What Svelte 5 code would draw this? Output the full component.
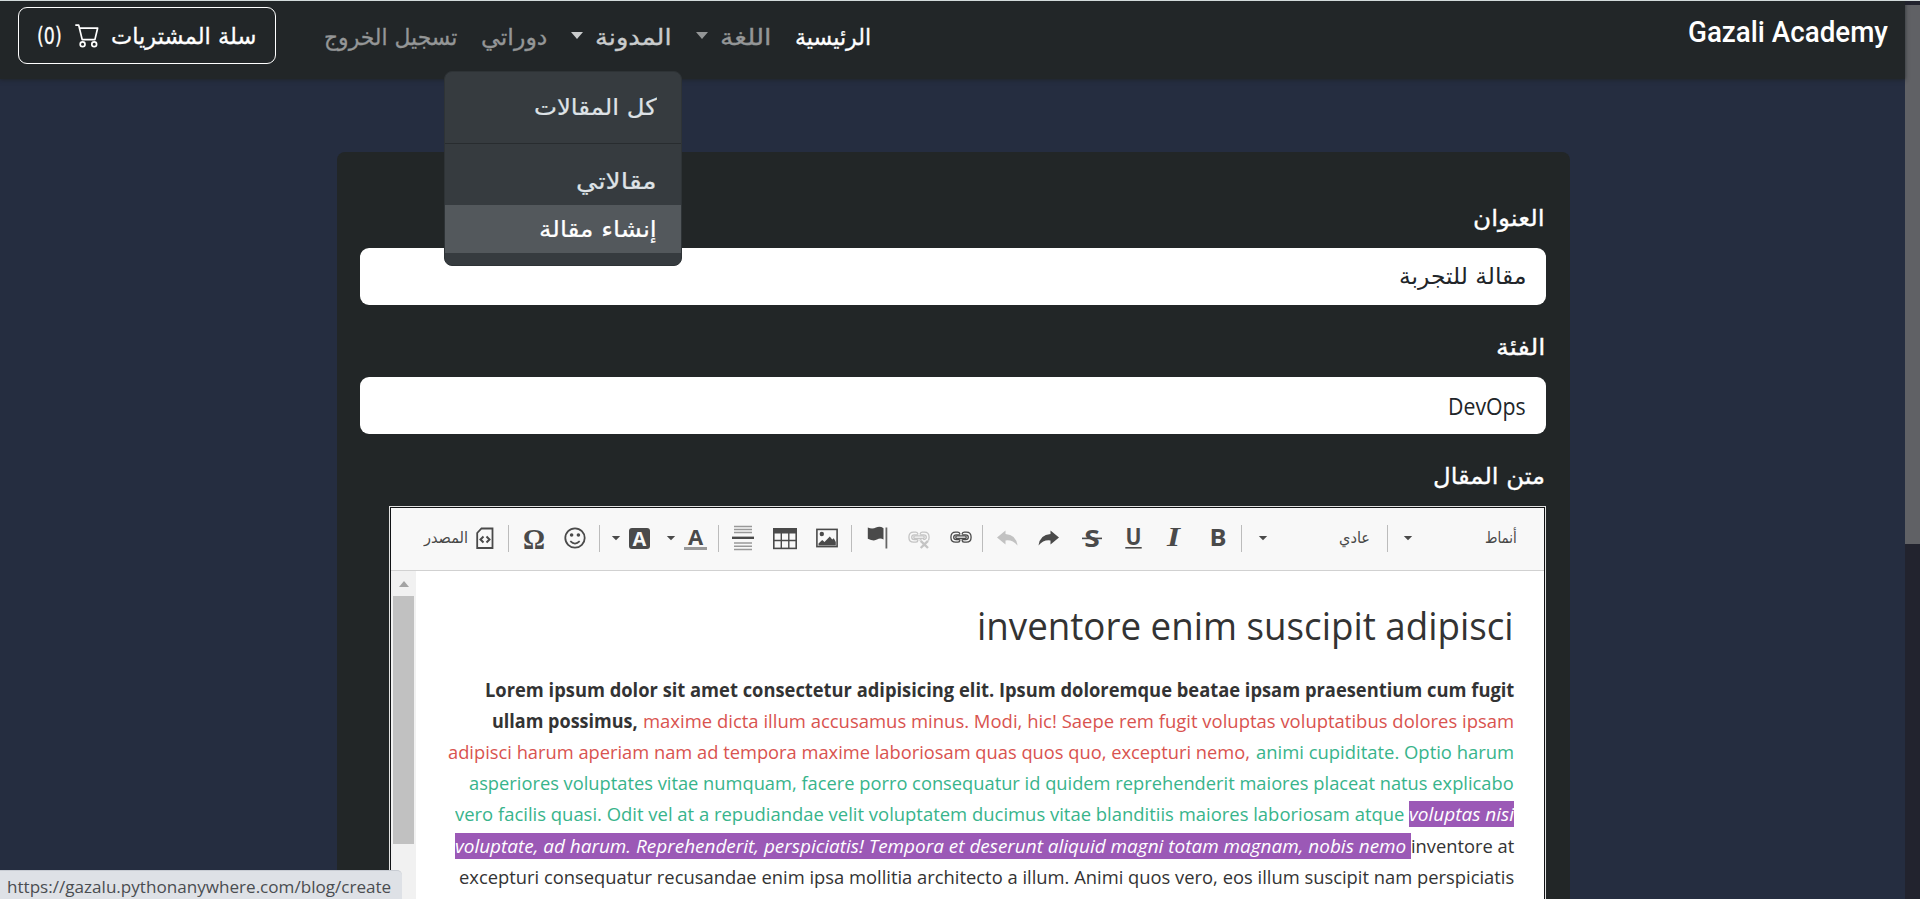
<script>
  // Squeezes or stretches a single line of text to the width of its slot.
  function fit(node) {
    const want = node.parentElement.clientWidth;
    const have = node.offsetWidth;
    if (have > 0) node.style.transform = `scaleX(${want / have})`;
  }

  const links = [
    { text: 'تسجيل الخروج', w: 133, gap: 48, tone: 'dim' },
    { text: 'دوراتي', w: 66, gap: 24, tone: 'dim' },
    { text: 'المدونة', w: 77, gap: 24, tone: 'open', caret: true },
    { text: 'اللغة', w: 51, gap: 24, tone: 'dim', caret: true },
    { text: 'الرئيسية', w: 76, gap: 24, tone: 'active' }
  ];

  const tools = [
    { k: 'label', text: 'المصدر', gap: 33, w: 44 },
    { k: 'source', gap: 8, w: 18 },
    { k: 'sep', gap: 14, w: 1 },
    { k: 'omega', gap: 14, w: 22 },
    { k: 'smile', gap: 19, w: 22 },
    { k: 'sep', gap: 13, w: 1 },
    { k: 'caret', gap: 11, w: 10 },
    { k: 'bg', gap: 8, w: 21 },
    { k: 'caret', gap: 16, w: 10 },
    { k: 'color', gap: 8, w: 23 },
    { k: 'sep', gap: 11, w: 1 },
    { k: 'rule', gap: 13, w: 22 },
    { k: 'table', gap: 19, w: 24 },
    { k: 'image', gap: 19, w: 22 },
    { k: 'sep', gap: 13, w: 1 },
    { k: 'flag', gap: 15, w: 21 },
    { k: 'unlink', gap: 20, w: 22 },
    { k: 'link', gap: 20, w: 22 },
    { k: 'sep', gap: 10, w: 1 },
    { k: 'undo', gap: 14, w: 21 },
    { k: 'redo', gap: 20, w: 21 },
    { k: 'strike', gap: 23, w: 20 },
    { k: 'underline', gap: 23, w: 17 },
    { k: 'italic', gap: 25, w: 13 },
    { k: 'bold', gap: 31, w: 14 },
    { k: 'sep', gap: 16, w: 1 },
    { k: 'caret', gap: 16, w: 10 },
    { k: 'label', text: 'عادي', gap: 71, w: 31 },
    { k: 'sep', gap: 17, w: 1 },
    { k: 'caret', gap: 15, w: 10 },
    { k: 'label', text: 'أنماط', gap: 72, w: 32 }
  ];

  const lines = [
    [{ c: 'strong', w: 1029, t: 'Lorem ipsum dolor sit amet consectetur adipisicing elit. Ipsum doloremque beatae ipsam praesentium cum fugit' }],
    [
      { c: 'strong', w: 146, t: 'ullam possimus,' },
      { c: 'red', w: 871, pad: 5, t: 'maxime dicta illum accusamus minus. Modi, hic! Saepe rem fugit voluptas voluptatibus dolores ipsam' }
    ],
    [
      { c: 'red', w: 802, t: 'adipisci harum aperiam nam ad tempora maxime laboriosam quas quos quo, excepturi nemo,' },
      { c: 'green', w: 258, pad: 6, t: 'animi cupiditate. Optio harum' }
    ],
    [{ c: 'green', w: 1045, t: 'asperiores voluptates vitae numquam, facere porro consequatur id quidem reprehenderit maiores placeat natus explicabo' }],
    [
      { c: 'green', w: 949, t: 'vero facilis quasi. Odit vel at a repudiandae velit voluptatem ducimus vitae blanditiis maiores laboriosam atque' },
      { c: 'mark', w: 105, pad: 5, t: 'voluptas nisi' }
    ],
    [
      { c: 'mark', w: 956, t: 'voluptate, ad harum. Reprehenderit, perspiciatis! Tempora et deserunt aliquid magni totam magnam, nobis nemo\u00a0' },
      { c: 'plain', w: 103, t: 'inventore at' }
    ],
    [{ c: 'plain', w: 1055, t: 'excepturi consequatur recusandae enim ipsa mollitia architecto a illum. Animi quos vero, eos illum suscipit nam perspiciatis' }]
  ];
</script>

{#snippet slot(text, w)}
  <span class="slot" style="width:{w}px"><bdi use:fit>{text}</bdi></span>
{/snippet}

{#snippet icon(k, w)}
  <svg class="icon" width={w} height="26" viewBox="0 0 {w} 26" fill="none" stroke="#4a4a4a">
    {#if k === 'source'}
      <path d="M5.5 3.5H16.5V23H1.2V8Z" stroke-width="1.8" />
      <path d="M7.5 11.5 4.5 14.5 7.5 17.5M10.5 11.5 13.5 14.5 10.5 17.5" stroke-width="2" />
    {:else if k === 'omega'}
      <text x="11" y="23.8" class="glyph omega" font-size="29" textLength="22" lengthAdjust="spacingAndGlyphs">Ω</text>
    {:else if k === 'smile'}
      <circle cx="11" cy="13" r="9.7" stroke-width="1.8" />
      <path d="M6.3 16.2Q11 21 15.7 16.2" stroke-width="1.7" />
      <circle cx="7.6" cy="10" r="1.8" fill="#4a4a4a" stroke="none" />
      <circle cx="14.4" cy="10" r="1.8" fill="#4a4a4a" stroke="none" />
    {:else if k === 'caret'}
      <path d="M.8 11H9.2L5 15.2Z" fill="#4a4a4a" stroke="none" />
    {:else if k === 'bg'}
      <rect x="0" y="3" width="21" height="21" rx="3" fill="#4a4a4a" stroke="none" />
      <text x="10.5" y="20.5" class="glyph light" font-size="20">A</text>
    {:else if k === 'color'}
      <text x="11.5" y="19.5" class="glyph" font-size="22">A</text>
      <rect x="0" y="22" width="23" height="3" fill="#999" stroke="none" />
    {:else if k === 'rule'}
      <path d="M2 1.5H20M2 4.5H20M2 7.5H20M2 18H20M2 21.3H20M2 24.5H20" stroke="#999" stroke-width="1.4" />
      <path d="M0 12.8H22" stroke-width="2.4" />
    {:else if k === 'table'}
      <rect x=".8" y="3.8" width="22.4" height="19.6" stroke-width="1.6" />
      <rect x="0" y="3" width="24" height="5.5" fill="#4a4a4a" stroke="none" />
      <path d="M8.3 8V23M15.8 8V23M1 15.5H23" stroke-width="1.4" />
    {:else if k === 'image'}
      <rect x=".9" y="4.4" width="20.2" height="17.2" stroke-width="1.6" />
      <circle cx="5.8" cy="9" r="2.2" fill="#4a4a4a" stroke="none" />
      <path d="M2.5 20.5V18.5L6.2 15 8.5 17 13.8 11.5 16.2 14.6 17.8 13.3 19.8 17V20.5Z" fill="#4a4a4a" stroke="none" />
    {:else if k === 'flag'}
      <path d="M.8 2.5Q5.2 4.4 9 2.6T16.5 3.2V14.5Q13.2 12.6 10 14.6T.8 13.8Z" fill="#4a4a4a" stroke="none" />
      <path d="M19.4 2.5V23.5" stroke="#666" stroke-width="1.8" />
    {:else if k === 'link' || k === 'unlink'}
      <g stroke={k === 'unlink' ? '#c4c4c4' : '#4a4a4a'} stroke-width="1.3">
        <path d="M9.8 9.6V8.6Q9.4 7.2 7.6 7.2H5.6Q.9 7.2 .9 12.2T5.6 17.2H7.6Q9.4 17.2 9.8 15.8V14.8M12.2 9.6V8.6Q12.6 7.2 14.4 7.2H16.4Q21.1 7.2 21.1 12.2T16.4 17.2H14.4Q12.6 17.2 12.2 15.8V14.8" />
        <path d="M9.8 9.8H6.2Q3.7 9.8 3.7 12.2T6.2 14.6H9.8M12.2 9.8H15.8Q18.3 9.8 18.3 12.2T15.8 14.6H12.2" />
        <rect x="5.8" y="10.9" width="10.4" height="2.6" rx="1.2" fill="#f8f8f8" />
        {#if k === 'unlink'}
          <path d="M12.5 15.5 20.3 23M20.3 15.5 12.5 23" stroke="#f8f8f8" stroke-width="5" />
          <path d="M12.7 15.8 20 23M20 15.8 12.7 23" stroke-width="2.4" />
        {/if}
      </g>
    {:else if k === 'redo'}
      <path d="M12.5 5.5 21 12.5 12.5 19.5V15.5Q5.5 14.5 .5 20.5 2 9.5 12.5 9Z" fill="#4a4a4a" stroke="none" />
    {:else if k === 'undo'}
      <path d="M8.5 5.5 0 12.5 8.5 19.5V15.5Q15.5 14.5 20.5 20.5 19 9.5 8.5 9Z" fill="#c2c2c2" stroke="none" />
    {:else if k === 'strike'}
      <text x="10" y="21.6" class="glyph" font-size="24" textLength="15.5" lengthAdjust="spacingAndGlyphs">S</text>
      <path d="M0 13.4H20" stroke-width="1.6" />
    {:else if k === 'underline'}
      <text x="8.5" y="19.6" class="glyph" font-size="22.5" textLength="16" lengthAdjust="spacingAndGlyphs">U</text>
      <path d="M.3 22.8H16.7" stroke-width="1.6" />
    {:else if k === 'italic'}
      <text x="6.5" y="21.3" class="glyph serif" font-size="27" textLength="13" lengthAdjust="spacingAndGlyphs">I</text>
    {:else if k === 'bold'}
      <text x="7" y="21.3" class="glyph" font-size="24" textLength="17" lengthAdjust="spacingAndGlyphs">B</text>
    {/if}
  </svg>
{/snippet}

<div class="screen">
  <div class="page">
    <header class="navbar">
      <button class="cart">
        {@render slot('(0)', 25)}
        <svg width="24" height="24" viewBox="0 0 24 24" fill="none" stroke="#fff" stroke-width="1.7" stroke-linejoin="round">
          <path d="M.3 1.1H3.7L7.2 15.6H19.9L22.6 4.2H4.6" />
          <circle cx="7.6" cy="20.3" r="2.4" />
          <circle cx="19.2" cy="20.3" r="2.4" />
        </svg>
        {@render slot('سلة المشتريات', 145)}
      </button>
      <nav class="links">
        {#each links as link}
          <span class="link {link.tone}" style="margin-left:{link.gap}px">
            {#if link.caret}<i class="arrow"></i>{/if}
            {@render slot(link.text, link.w)}
          </span>
        {/each}
      </nav>
      <div class="brand">{@render slot('Gazali Academy', 200)}</div>

      <div class="menu">
        <div class="item">{@render slot('كل المقالات', 123)}</div>
        <hr />
        <div class="item">{@render slot('مقالاتي', 81)}</div>
        <div class="item hover">{@render slot('إنشاء مقالة', 118)}</div>
      </div>
    </header>

    <main class="card">
      <div class="label">{@render slot('العنوان', 72)}</div>
      <div class="input">{@render slot('مقالة للتجربة', 127)}</div>
      <div class="label">{@render slot('الفئة', 49)}</div>
      <div class="input latin">{@render slot('DevOps', 78)}</div>
      <div class="label">{@render slot('متن المقال', 112)}</div>

      <section class="editor">
        <div class="toolbar">
          {#each tools as tool}
            <span class="tool" style="margin-left:{tool.gap}px">
              {#if tool.k === 'label'}
                {@render slot(tool.text, tool.w)}
              {:else if tool.k === 'sep'}
                <i class="sep"></i>
              {:else}
                {@render icon(tool.k, tool.w)}
              {/if}
            </span>
          {/each}
        </div>
        <div class="body">
          <div class="track">
            <i class="up"></i>
            <i class="thumb"></i>
          </div>
          <article>
            <h1>{@render slot('inventore enim suscipit adipisci', 537)}</h1>
            {#each lines as line}
              <div class="line">
                {#each line as run}
                  <span class="run {run.c}" style="margin-left:{run.pad ?? 0}px">{@render slot(run.t, run.w)}</span>
                {/each}
              </div>
            {/each}
          </article>
        </div>
      </section>
    </main>
  </div>
  <aside class="scroll"><i></i></aside>
  <div class="status">{@render slot('https://gazalu.pythonanywhere.com/blog/create', 384)}</div>
</div>

<style>
  :global(body) {
    margin: 0;
    overflow: hidden;
  }
  .screen {
    position: relative;
    box-sizing: border-box;
    display: flex;
    width: 1920px;
    height: 899px;
    overflow: hidden;
    border-top: 1px solid #d3dbdb;
    background: #252d40;
    font-family: 'DejaVu Sans', sans-serif;
    font-size: 23px;
    color: #fff;
  }
  .slot {
    display: inline-block;
    flex: none;
    white-space: nowrap;
    text-align: left;
  }
  .slot bdi {
    display: inline-block;
    transform-origin: 0 50%;
  }
  .page {
    width: 1905px;
    display: flex;
    flex-direction: column;
  }
  .navbar {
    position: relative;
    z-index: 2;
    box-sizing: border-box;
    flex: none;
    display: flex;
    align-items: flex-start;
    height: 78px;
    padding: 6px 17px 0 18px;
    background: #222628;
    box-shadow: 0 1px 4px rgba(30, 34, 38, 0.8);
  }
  .cart {
    box-sizing: border-box;
    display: flex;
    align-items: center;
    width: 258px;
    height: 57px;
    padding: 0 19px 0 18px;
    border: 1px solid #fff;
    border-radius: 9px;
    background: none;
    color: #fff;
    font: inherit;
    -webkit-text-stroke: 0.3px currentColor;
  }
  .cart svg {
    margin: 0 12px 0 13px;
  }
  .links {
    display: flex;
    height: 61px;
    line-height: 61px;
    -webkit-text-stroke: 0.3px currentColor;
  }
  .link {
    display: flex;
    align-items: center;
  }
  .dim {
    color: #949697;
  }
  .open {
    color: #c9cbcc;
  }
  .arrow {
    width: 0;
    margin: 0 12px 5px 0;
    border: 6.5px solid transparent;
    border-top: 7px solid currentColor;
    border-bottom: 0;
  }
  .brand {
    margin-left: auto;
    height: 50px;
    line-height: 50px;
    font-family: Roboto, sans-serif;
    font-weight: 500;
    font-size: 29px;
  }
  .menu {
    position: absolute;
    left: 444px;
    top: 70px;
    box-sizing: border-box;
    width: 238px;
    height: 195px;
    padding: 11px 0 0;
    border: 1px solid #2e3336;
    border-radius: 8px;
    background: #363b3f;
    color: #dee2e6;
    -webkit-text-stroke: 0.2px currentColor;
  }
  .item {
    box-sizing: border-box;
    height: 48px;
    line-height: 49px;
    padding-right: 24px;
    text-align: right;
  }
  .menu hr {
    height: 1px;
    margin: 12px 0 13px;
    border: 0;
    background: #282c2f;
  }
  .hover {
    background: #53585c;
    color: #fff;
  }
  .card {
    box-sizing: border-box;
    width: 1233px;
    height: 760px;
    margin: 73px 0 0 337px;
    padding: 39px 24px 0 23px;
    border-radius: 8px 8px 0 0;
    background: #222627;
  }
  .label {
    height: 57px;
    line-height: 55px;
    padding-right: 1px;
    text-align: right;
    -webkit-text-stroke: 0.3px currentColor;
  }
  .input {
    box-sizing: border-box;
    height: 57px;
    line-height: 57px;
    margin-bottom: 15px;
    padding-right: 20px;
    border-radius: 9px;
    background: #fff;
    color: #212529;
    text-align: right;
  }
  .latin {
    font-family: 'Open Sans', sans-serif;
    font-size: 24px;
  }
  .editor {
    box-sizing: border-box;
    width: 1157px;
    height: 500px;
    margin-left: 29px;
    padding: 1px;
    border: 1px solid #e2e2e2;
    color: #212529;
    background: #111315;
  }
  .toolbar {
    display: flex;
    align-items: flex-start;
    height: 62px;
    border-bottom: 1px solid #d1d1d1;
    background: #f8f8f8;
    color: #484848;
    font-size: 15.5px;
  }
  .tool {
    display: flex;
    align-items: center;
    flex: none;
    height: 60px;
  }
  .icon {
    display: block;
    overflow: visible;
    line-height: 1;
  }
  .sep {
    width: 1px;
    height: 27px;
    background: #bcbcbc;
  }
  .glyph {
    fill: #4a4a4a;
    stroke: none;
    font-family: 'Open Sans', sans-serif;
    font-weight: 700;
    text-anchor: middle;
  }
  .light {
    fill: #f8f8f8;
  }
  .omega {
    font-family: 'Liberation Serif', serif;
  }
  .serif {
    font-family: 'Liberation Serif', serif;
    font-style: italic;
  }
  .body {
    display: flex;
    height: 440px;
    background: #fff;
  }
  .track {
    width: 21px;
    padding: 0 2px;
    background: #f1f1f1;
  }
  .up {
    display: block;
    width: 0;
    margin: 10px auto 9px;
    border: 5.5px solid transparent;
    border-bottom: 6px solid #a3a3a3;
    border-top: 0;
  }
  .thumb {
    display: block;
    height: 248px;
    background: #c1c1c1;
  }
  article {
    flex: 1;
    padding-right: 30px;
    text-align: right;
    font-family: 'Open Sans', sans-serif;
    font-size: 19px;
    color: #333;
  }
  h1 {
    height: 56px;
    margin: 26px 0 21px;
    line-height: 56px;
    font-size: 38.5px;
    font-weight: 400;
  }
  .line {
    display: flex;
    justify-content: flex-end;
    align-items: center;
    height: 31.2px;
    line-height: 26px;
  }
  .run {
    height: 26px;
  }
  .strong {
    font-weight: 700;
  }
  .red {
    color: #d9534f;
  }
  .green {
    color: #38b48b;
  }
  .mark {
    background: #9b59b6;
    color: #fff;
    font-style: italic;
  }
  .scroll {
    box-sizing: border-box;
    width: 15px;
    padding-top: 4px;
    background: #22232e;
  }
  .scroll i {
    display: block;
    height: 539px;
    background: #606165;
  }
  .status {
    position: absolute;
    z-index: 3;
    left: 0;
    bottom: 0;
    box-sizing: border-box;
    width: 402px;
    height: 29px;
    padding-left: 7px;
    border-radius: 0 5px 0 0;
    border-top: 1px solid #c8ccd3;
    background: #dee1e6;
    color: #4a4d51;
    font-family: 'Open Sans', sans-serif;
    font-size: 17px;
    line-height: 31px;
  }
</style>
